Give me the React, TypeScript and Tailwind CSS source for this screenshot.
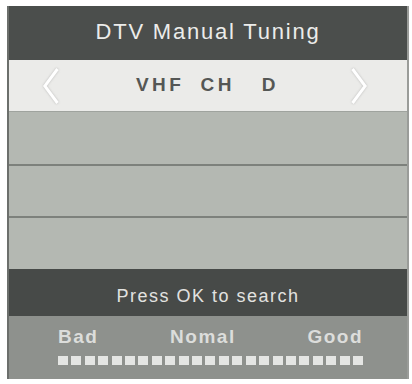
export default function App() {
  const squares = Array.from({ length: 23 }, (_, i) => i)

  return (
    <div className="h-[384px] w-[412px] bg-white pl-[7px] pt-[6px] font-['Liberation_Sans',Arial,sans-serif]">
      <div className="flex w-[402px] flex-col border-x-2 border-l-[#6c6f6c] border-r-[#9a9c99]">
        {/* title */}
        <div className="flex h-[54px] items-center justify-center bg-[#4b4e4c] pb-[3px] text-[22px] tracking-[1.8px] text-[#ececea]">
          DTV Manual Tuning
        </div>

        {/* band selector */}
        <div className="flex h-[51px] items-center bg-[#ebebe9] pl-[34px] pr-[40px]">
          <svg width="16" height="36" viewBox="0 0 16 36" className="drop-shadow-[0_0_1px_rgba(150,150,150,0.6)]">
            <path d="M14.5 1 L1.8 18 L14.5 35" fill="none" stroke="#ffffff" strokeWidth="3" />
          </svg>
          <div className="ml-[5px] flex flex-1 items-center justify-center text-[19px] font-bold tracking-[3.5px] text-[#555755]">
            <span>VHF</span>
            <span className="ml-[16px]">CH</span>
            <span className="ml-[27px]">D</span>
          </div>
          <svg width="16" height="36" viewBox="0 0 16 36" className="drop-shadow-[0_0_1px_rgba(150,150,150,0.6)]">
            <path d="M1.5 1 L14.2 18 L1.5 35" fill="none" stroke="#ffffff" strokeWidth="3" />
          </svg>
        </div>

        {/* empty rows */}
        <div className="h-[55px] border-t border-t-[#9fa39e] border-b-2 border-b-[#7d817c] bg-[#b4b8b2]" />
        <div className="h-[52px] border-b-2 border-b-[#7d817c] bg-[#b4b8b2]" />
        <div className="h-[51px] bg-[#b4b8b2]" />

        {/* prompt */}
        <div className="flex h-[47px] items-center justify-center bg-[#474a48] pt-[7px] text-[18px] tracking-[1.5px] text-[#e2e2e0]">
          Press OK to search
        </div>

        {/* signal quality */}
        <div className="flex h-[63px] flex-col bg-[#8e918d] pl-[49px] pr-[44px] pt-[7px]">
          <div className="flex justify-between text-[19px] font-bold tracking-[1.5px] text-[#dcdddb]">
            <span>Bad</span>
            <span>Nomal</span>
            <span>Good</span>
          </div>
          <div className="mt-[4px] flex justify-between">
            {squares.map(i => (
              <div key={i} className="h-[9px] w-[10px] bg-[#e4e5e3]" />
            ))}
          </div>
        </div>
      </div>
    </div>
  )
}
